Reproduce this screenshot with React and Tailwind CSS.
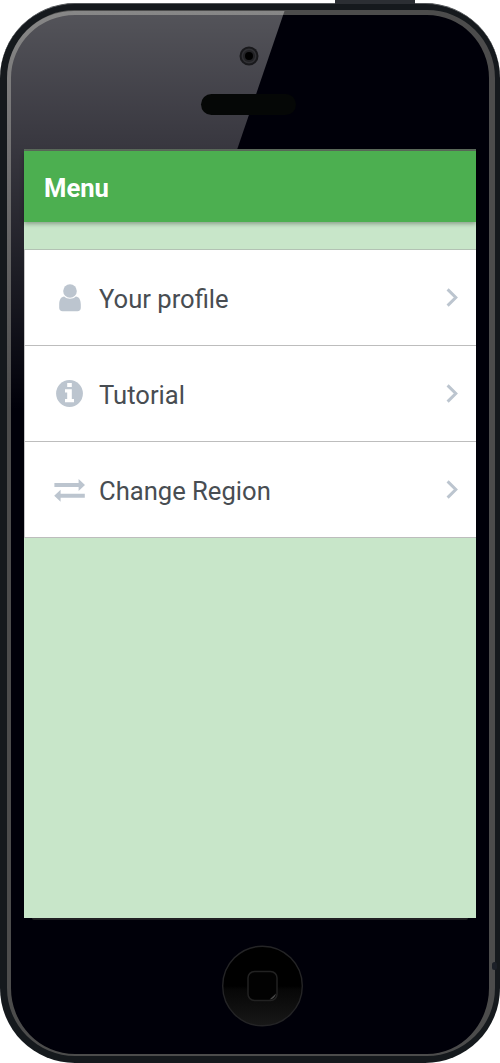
import React from "react";

const PersonIcon = () => (
  <svg width="22" height="28" viewBox="0 0 22 28" fill="#bcc5cf">
    <circle cx="11" cy="7" r="6.800" />
    <path d="M5.200 12.600C2 12.800.2 15.800.2 20.500v3.200c0 2.200 1.200 3.500 3.400 3.500h14.800c2.200 0 3.400-1.300 3.400-3.500v-3.200c0-4.700-1.800-7.700-5-7.900-1.600 1.500-3.600 2.200-5.800 2.200s-4.200-.7-5.800-2.200z" />
  </svg>
);

const InfoIcon = () => (
  <svg width="27" height="27" viewBox="0 0 27 27">
    <circle cx="13.500" cy="13.500" r="13.400" fill="#bcc5cf" />
    <path fill="#fff" d="M11.200 3h4.600v4h-4.600zM9 9.200h6.800v9.700H18V22.300H9v-3.400h2.200v-6.300H9z" />
  </svg>
);

const ExchangeIcon = () => (
  <svg width="31" height="24" viewBox="0 0 31 24" fill="#bcc5cf">
    <path d="M.4 4.900h24.200V.9L31 6.900l-6.400 6V8.900H.4zM30.800 15.800H6.600v-4L.2 17.800l6.400 6v-4h24.200z" />
  </svg>
);

const Chevron = () => (
  <svg className="mr-[17px]" width="13" height="19" viewBox="0 0 13 19" fill="none" stroke="#bcc5cf" strokeWidth="3">
    <path d="M1.600 1.400L9.800 9.500 1.600 17.600" />
  </svg>
);

const items = [
  { label: "Your profile", Icon: PersonIcon },
  { label: "Tutorial", Icon: InfoIcon },
  { label: "Change Region", Icon: ExchangeIcon },
];

const Glare = () => (
  <svg className="absolute inset-0" width="500" height="1063" viewBox="0 0 500 1063">
    <defs>
      <linearGradient id="glare" x1="0" y1="11" x2="0" y2="410" gradientUnits="userSpaceOnUse">
        <stop offset="0" stopColor="#fff" stopOpacity=".33" />
        <stop offset=".34" stopColor="#fffaff" stopOpacity=".22" />
        <stop offset="1" stopColor="#fff" stopOpacity="0" />
      </linearGradient>
    </defs>
    <path d="M7 78A67 67 0 0 1 74 11H284.500L148 410H7z" fill="url(#glare)" />
  </svg>
);

const Camera = () => (
  <svg width="20" height="20" viewBox="0 0 20 20">
    <circle cx="10" cy="10" r="9.500" fill="#19191c" />
    <circle cx="10" cy="10" r="7.500" fill="#303034" />
    <circle cx="10" cy="10" r="6" fill="#222225" />
    <circle cx="10" cy="10" r="4" fill="#000" />
  </svg>
);

const HomeButton = () => (
  <svg width="82" height="82" viewBox="0 0 82 82">
    <defs>
      <linearGradient id="home" x1="0" y1="0" x2="0" y2="1">
        <stop offset="0" stopColor="#000" />
        <stop offset=".5" stopColor="#000" />
        <stop offset=".55" stopColor="#070707" />
        <stop offset="1" stopColor="#181818" />
      </linearGradient>
    </defs>
    <circle cx="41.500" cy="41" r="39.800" fill="url(#home)" stroke="#242426" strokeWidth="1.400" />
    <rect x="27" y="26.500" width="29" height="29" rx="6.500" fill="#020202" stroke="#222" strokeWidth="1.500" />
    <path d="M55 48.500q-1 5.500-6.500 6z" fill="#484848" />
  </svg>
);

export default function App() {
  return (
    <div className="relative h-[1063px] w-[500px] overflow-hidden bg-white pt-[3px] font-['Roboto',sans-serif]">
      <div className="absolute left-[335px] top-0 h-1 w-20 bg-[#2b2e33]" />
      <div className="h-[1060px] rounded-[75px] border-t border-[#55585b] bg-[#15191d] pt-[6px] pr-[5px] pl-[7px]">
        <div className="h-[1046px] rounded-[68px] border-t-[5px] border-r-[6px] border-b-2 border-l-4 border-[#4c4c4c] bg-[#000009]">
          <div className="flex flex-col items-center">
            <div className="relative z-10 mt-[31px] mr-[3px] h-5"><Camera /></div>
            <div className="relative z-10 mt-7 mr-[3px] h-[21px] w-[95px] rounded-full bg-[#050706]" />
          </div>
          <main className="relative z-10 mt-[34px] ml-[13px] flex h-[769px] w-[452px] flex-col border-t-2 border-[#5b6a5b] bg-[#c8e6c9]">
            <header className="z-10 flex h-[71px] shrink-0 items-center bg-[#4caf50] pl-5 pt-[3px] text-[25.6px] font-bold text-white shadow-[0_2px_4px_rgba(0,0,0,0.3)]">
              Menu
            </header>
            <nav className="mt-[27px] border-t border-[#b3c2b4]">
              {items.map(({ label, Icon }) => (
                <a key={label} className="flex h-24 items-center border-b border-l border-b-[#bdbdbd] border-l-[#c6c6c6] bg-white">
                  <span className="ml-[29px] flex w-[31px] justify-center"><Icon /></span>
                  <span className="ml-3.5 flex-1 pt-[3px] text-[25.6px] text-[#484d52]">{label}</span>
                  <Chevron />
                </a>
              ))}
            </nav>
          </main>
          <div className="mx-[21px] h-0.5 rounded-b bg-[#202022]" />
          <div className="mt-[25px] ml-[210px] h-[82px]"><HomeButton /></div>
        </div>
      </div>
      <div className="absolute left-[492px] top-[962px] h-2 w-[5px] rounded-sm bg-[#1c2028]" />
      <Glare />
    </div>
  );
}
